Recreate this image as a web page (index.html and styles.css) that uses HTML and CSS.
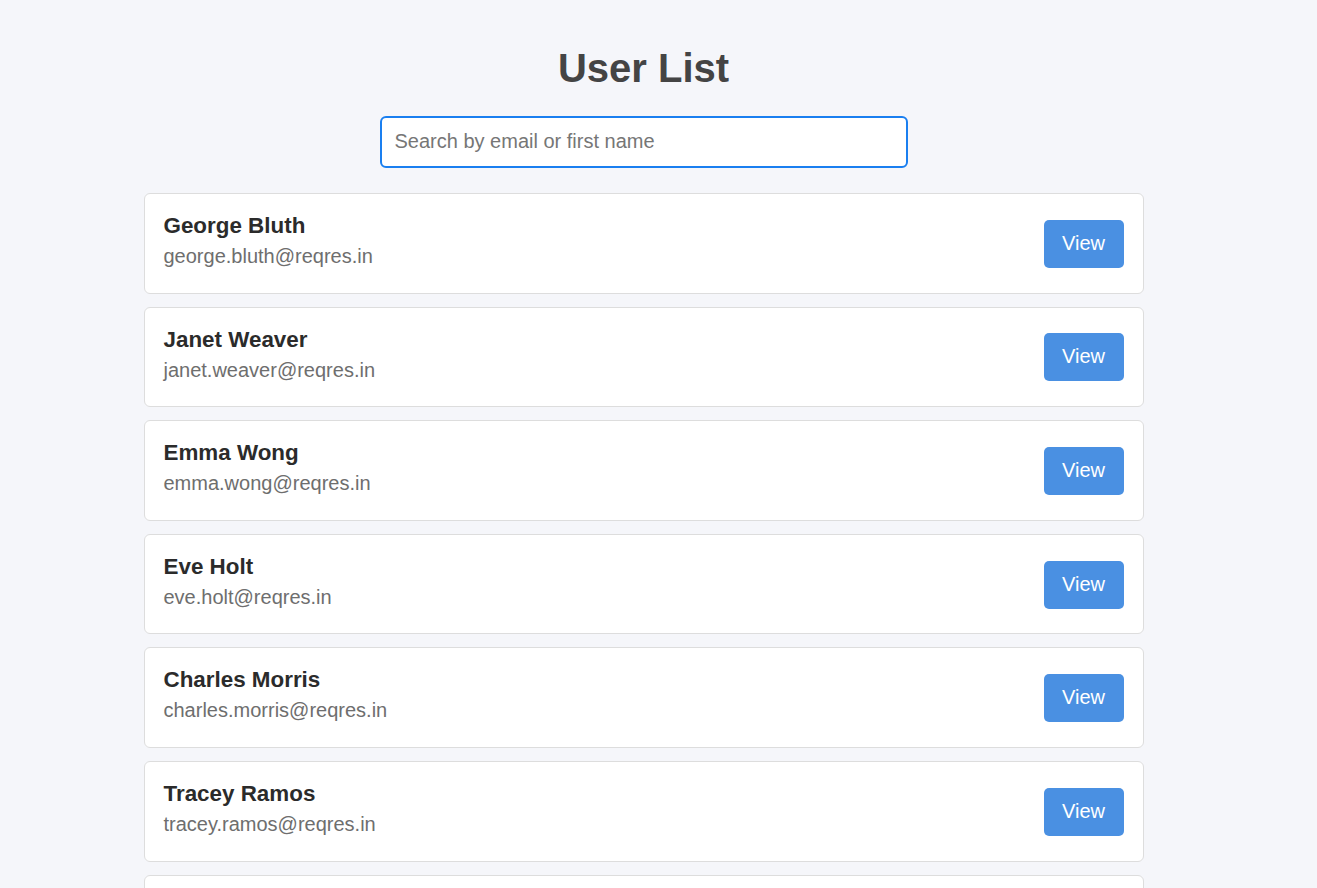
FILE: index.html
```html
<!DOCTYPE html>
<html lang="en">
<head>
<meta charset="utf-8">
<title>User List</title>
<link rel="stylesheet" href="styles.css">
</head>
<body>
<div class="app">
  <h1 class="title">User List</h1>
  <div class="search-wrap">
    <input class="search" type="text" placeholder="Search by email or first name" autofocus>
  </div>
  <ul class="users">
    <li class="card"><div class="info"><h3 class="name">George Bluth</h3><p class="email">george.bluth@reqres.in</p></div><button class="view">View</button></li>
    <li class="card"><div class="info"><h3 class="name">Janet Weaver</h3><p class="email">janet.weaver@reqres.in</p></div><button class="view">View</button></li>
    <li class="card"><div class="info"><h3 class="name">Emma Wong</h3><p class="email">emma.wong@reqres.in</p></div><button class="view">View</button></li>
    <li class="card"><div class="info"><h3 class="name">Eve Holt</h3><p class="email">eve.holt@reqres.in</p></div><button class="view">View</button></li>
    <li class="card"><div class="info"><h3 class="name">Charles Morris</h3><p class="email">charles.morris@reqres.in</p></div><button class="view">View</button></li>
    <li class="card"><div class="info"><h3 class="name">Tracey Ramos</h3><p class="email">tracey.ramos@reqres.in</p></div><button class="view">View</button></li>
    <li class="card"><div class="info"><h3 class="name">Michael Lawson</h3><p class="email">michael.lawson@reqres.in</p></div><button class="view">View</button></li>
  </ul>
</div>
</body>
</html>
```
FILE: styles.css
```css
html, body {
  margin: 0;
  background: #f5f6fa;
}
body {
  font-family: "Liberation Sans", Arial, sans-serif;
  padding: 20px 30px 20px 0;
}
.app {
  max-width: 1000px;
  margin: 0 auto;
}
.title {
  margin: 26px 0 25px;
  text-align: center;
  font-size: 40px;
  font-weight: bold;
  color: #444444;
}
.search-wrap {
  display: flex;
  justify-content: center;
}
.search {
  box-sizing: border-box;
  width: 528px;
  height: 52px;
  padding: 11px 13px 13px;
  font-family: "Liberation Sans", Arial, sans-serif;
  font-size: 20px;
  color: #333;
  background: #fff;
  border: 2px solid #1a7ff0;
  border-radius: 6px;
  outline: none;
}
.search::placeholder {
  color: #767676;
}
.users {
  list-style: none;
  margin: 25px 0 0;
  padding: 0;
  display: flex;
  flex-direction: column;
  gap: 13px;
}
.card {
  display: flex;
  align-items: center;
  justify-content: space-between;
  background: #fff;
  border: 1px solid #dddddd;
  border-radius: 6px;
  padding: 19px 19px 18px 19px;
}
.info {
  display: flex;
  flex-direction: column;
}
.name {
  margin: 0 0 6px;
  font-size: 22.4px;
  font-weight: bold;
  color: #2b2b2b;
}
.email {
  margin: 0 0 6.6px;
  font-size: 20px;
  color: #6e6e6e;
}
.view {
  font-family: "Liberation Sans", Arial, sans-serif;
  font-size: 20px;
  color: #fff;
  background: #4a90e2;
  border: none;
  border-radius: 5px;
  padding: 12px 18.5px 13px;
  cursor: pointer;
}
```
